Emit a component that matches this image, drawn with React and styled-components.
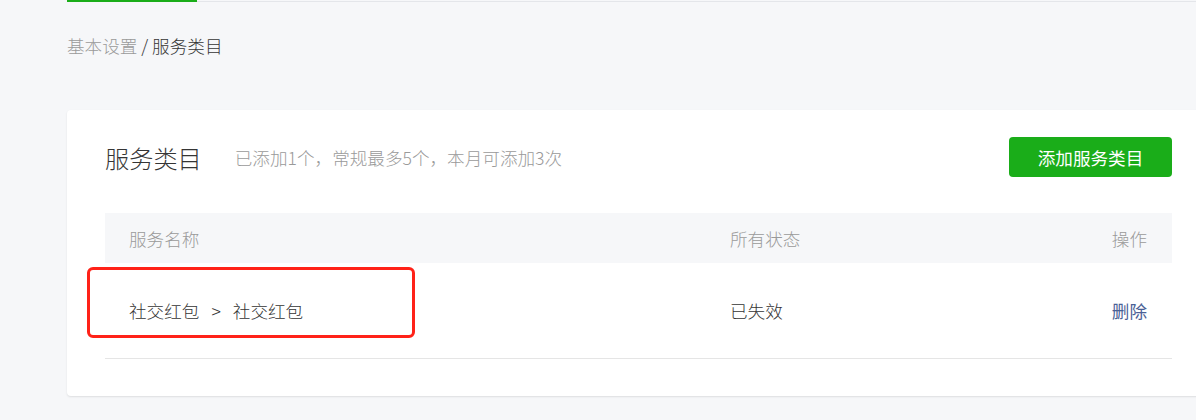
import React from "react";
import styled, { createGlobalStyle } from "styled-components";

const Global = createGlobalStyle`
  html, body { margin: 0; padding: 0; background: #f6f7f9; overflow: hidden; }
  body { font-family: "Noto Sans CJK SC", "Noto Sans", sans-serif; font-weight: 300; color: #353535; }
  * { box-sizing: border-box; }
`;

const Page = styled.div`
  width: 1210px;
  padding-left: 67px;
  min-height: 420px;
`;

const TabLine = styled.div`
  height: 2px;
  margin-right: -20px;
  border-bottom: 1px solid #e4e6ea;
  display: flex;
`;

const TabIndicator = styled.div`
  width: 130px;
  height: 2px;
  background: #1aad19;
`;

const Breadcrumb = styled.div`
  margin-top: 32px;
  height: 24px;
  line-height: 24px;
  font-size: 17.6px;
  color: #353535;
`;

const Crumb = styled.span`
  color: ${(p) => (p.$muted ? "#9a9a9a" : "#353535")};
`;

const Card = styled.div`
  position: relative;
  margin-top: 52px;
  background: #fff;
  border-radius: 4px;
  box-shadow: 0 1px 2px rgba(0, 0, 0, 0.1);
  padding: 27px 38px 37px;
`;

const CardHeader = styled.div`
  height: 40px;
  display: flex;
  align-items: center;
  justify-content: space-between;
`;

const TitleGroup = styled.div`
  display: flex;
  align-items: center;
`;

const Title = styled.h2`
  margin: 0;
  font-size: 24.2px;
  font-weight: 300;
  color: #353535;
`;

const Subtitle = styled.span`
  margin-left: 33px;
  font-size: 17.6px;
  color: #9a9a9a;
`;

const AddButton = styled.button`
  width: 163px;
  height: 40px;
  border: none;
  border-radius: 4px;
  background: #1aad19;
  color: #fff;
  font-family: inherit;
  font-weight: 400;
  font-size: 17.6px;
  cursor: pointer;
`;

const Table = styled.div`
  margin-top: 36px;
`;

const Row = styled.div`
  display: grid;
  grid-template-columns: 601px 1fr auto;
  align-items: center;
  padding: 0 25px 0 24px;
  height: ${(p) => (p.$head ? "50px" : "96px")};
  background: ${(p) => (p.$head ? "#f6f7f9" : "#fff")};
  border-bottom: ${(p) => (p.$head ? "none" : "1px solid #e5e5e5")};
  font-size: 17.6px;
  color: ${(p) => (p.$head ? "#9a9a9a" : "#353535")};
`;

const Sep = styled.span`
  margin: 0 12px;
`;

const Link = styled.a`
  color: #4a6196;
  font-weight: 400;
  text-decoration: none;
  cursor: pointer;
`;

const Annotation = styled.div`
  position: absolute;
  left: 20px;
  top: 157px;
  width: 328px;
  height: 71px;
  border: 3px solid #ff2218;
  border-radius: 6px;
  pointer-events: none;
`;

export default function App() {
  return (
    <>
      <Global />
      <Page>
        <TabLine>
          <TabIndicator />
        </TabLine>
        <Breadcrumb>
          <Crumb $muted>基本设置</Crumb> / <Crumb>服务类目</Crumb>
        </Breadcrumb>
        <Card>
          <CardHeader>
            <TitleGroup>
              <Title>服务类目</Title>
              <Subtitle>已添加1个，常规最多5个，本月可添加3次</Subtitle>
            </TitleGroup>
            <AddButton>添加服务类目</AddButton>
          </CardHeader>
          <Table>
            <Row $head>
              <span>服务名称</span>
              <span>所有状态</span>
              <span>操作</span>
            </Row>
            <Row>
              <span>
                社交红包<Sep>&gt;</Sep>社交红包
              </span>
              <span>已失效</span>
              <Link>删除</Link>
            </Row>
          </Table>
          <Annotation />
        </Card>
      </Page>
    </>
  );
}
